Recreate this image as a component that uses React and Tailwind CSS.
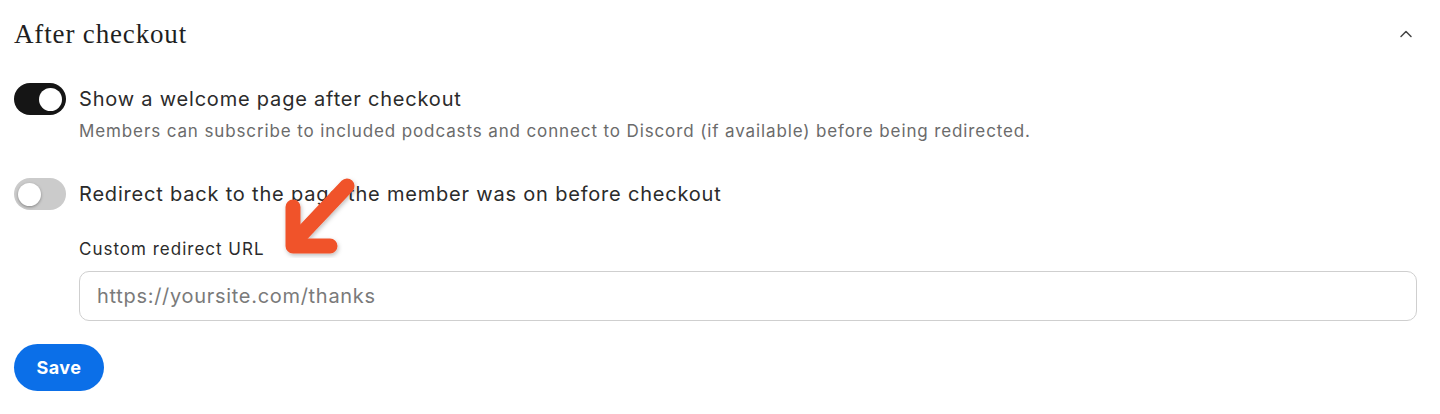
import { ChevronUp } from "lucide-react";

function Toggle({ on }) {
  return (
    <div
      className={`flex h-[32px] w-[52px] shrink-0 items-center rounded-full px-[4px] ${
        on ? "justify-end bg-[#151515]" : "justify-start bg-[#cbcbcb]"
      }`}
    >
      <div
        className={`h-[23px] w-[23px] rounded-full bg-white ${
          on ? "" : "shadow-[0_1px_3px_rgba(0,0,0,0.35)]"
        }`}
      />
    </div>
  );
}

export default function App() {
  return (
    <div
      className="relative h-[414px] w-[1440px] bg-white text-[#2b2b2b]"
      style={{ fontFamily: "Inter, 'Liberation Sans', sans-serif" }}
    >
      <div className="flex items-center justify-between pl-[14px] pr-[24px] pt-[17px]">
        <h2 className="font-['Liberation_Serif',serif] text-[27px] leading-[34px] tracking-[0.85px] text-[#1f1f1f]">
          After checkout
        </h2>
        <ChevronUp className="h-[20px] w-[20px] text-[#444]" strokeWidth={1.8} />
      </div>

      <div className="mt-[32px] flex gap-[13px] pl-[14px]">
        <Toggle on />
        <div className="pt-[2px]">
          <div className="text-[20px] leading-[28px] tracking-[0.8px]">
            Show a welcome page after checkout
          </div>
          <div className="mt-[6px] text-[17px] leading-[24px] tracking-[0.88px] text-[#6b6b6b]">
            Members can subscribe to included podcasts and connect to Discord (if available) before being redirected.
          </div>
        </div>
      </div>

      <div className="mt-[35px] flex items-center gap-[13px] pl-[14px]">
        <Toggle />
        <div className="text-[20px] leading-[28px] tracking-[0.8px]">
          Redirect back to the page the member was on before checkout
        </div>
      </div>

      <div className="mt-[27px] pl-[79px] pr-[23px]">
        <div className="text-[17px] leading-[24px] tracking-[1px]">Custom redirect URL</div>
        <input
          className="mt-[10px] h-[50px] w-full rounded-[10px] border border-[#cfcfcf] px-[17px] text-[20px] tracking-[0.7px] text-[#2b2b2b] placeholder:text-[#7a7a7a] outline-none"
          placeholder="https://yoursite.com/thanks"
        />
      </div>

      <div className="mt-[23px] pl-[14px]">
        <button className="h-[47px] w-[90px] rounded-full bg-[#0b6fe8] text-[18px] font-bold tracking-[0.5px] text-white">
          Save
        </button>
      </div>

      <svg
        className="pointer-events-none absolute left-0 top-0"
        width="1440"
        height="414"
        viewBox="0 0 1440 414"
      >
        <defs>
          <filter id="sh" x="-20%" y="-20%" width="140%" height="140%">
            <feDropShadow dx="1" dy="2" stdDeviation="2" floodColor="#000" floodOpacity="0.25" />
          </filter>
        </defs>
        <g
          filter="url(#sh)"
          stroke="#f0532b"
          strokeWidth="15"
          strokeLinecap="round"
          strokeLinejoin="round"
          fill="none"
        >
          <path d="M347 186 L297 239" />
          <path d="M293 207 L293 246 L330 246" />
        </g>
      </svg>
    </div>
  );
}
